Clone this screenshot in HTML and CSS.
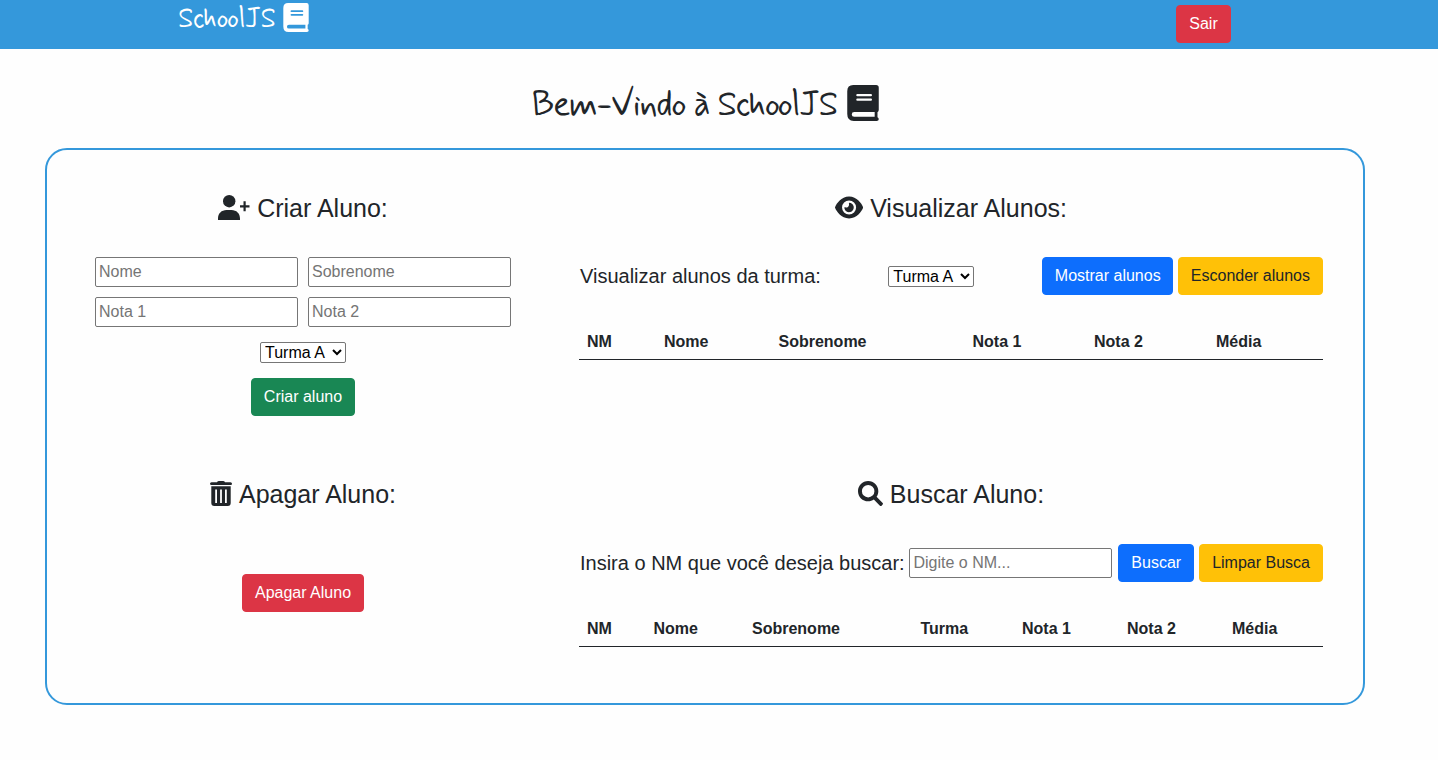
FILE: index.html
```html
<!DOCTYPE html>
<html lang="pt-BR">
<head>
<meta charset="utf-8">
<title>SchoolJS</title>
<link rel="stylesheet" href="styles.css">
</head>
<body>
<svg class="sprite" aria-hidden="true">
  <symbol id="book" viewBox="0 0 448 512"><path fill-rule="evenodd" d="M85 0H410Q448 0 448 38V356Q448 378 430 386V460Q448 468 448 486Q448 512 418 512H92Q0 512 0 414V88Q0 0 85 0zM100 384Q64 384 64 418Q64 452 100 452H390V384zM144 128Q128 128 128 144T144 160H336Q352 160 352 144T336 128zM144 192Q128 192 128 208T144 224H336Q352 224 352 208T336 192z"/></symbol>
  <symbol id="user-plus" viewBox="0 0 32 25"><circle cx="11.200" cy="6.200" r="6.200"/><path d="M0 25V23.500C0 18.500 3.500 15 8.500 15H13.500C18.500 15 22 18.500 22 23.500V25zM25.500 6.300H27.700V10.200H31.500V12.400H27.700V16.300H25.500V12.400H22V10.200H25.500z"/></symbol>
  <symbol id="eye" viewBox="0 0 576 512"><path d="M288 32c-80.800 0-145.500 36.800-192.600 80.600C48.600 156 17.300 208 2.500 243.700c-3.300 7.900-3.300 16.700 0 24.600C17.300 304 48.600 356 95.400 399.400C142.500 443.200 207.200 480 288 480s145.500-36.800 192.600-80.600c46.800-43.500 78.100-95.400 93-131.100c3.300-7.900 3.300-16.700 0-24.600c-14.900-35.700-46.200-87.700-93-131.100C433.500 68.800 368.800 32 288 32zM144 256a144 144 0 1 1 288 0 144 144 0 1 1 -288 0zm144-64c0 35.300-28.700 64-64 64c-7.100 0-13.900-1.200-20.300-3.300c-5.500-1.800-11.900 1.600-11.700 7.400c.3 6.900 1.300 13.800 3.200 20.700c13.700 51.200 66.400 81.600 117.600 67.900s81.600-66.400 67.900-117.600c-11.100-41.500-47.800-69.400-88.600-71.100c-5.800-.2-9.200 6.100-7.400 11.700c2.100 6.400 3.300 13.200 3.300 20.300z"/></symbol>
  <symbol id="trash" viewBox="0 0 22 25"><path fill-rule="evenodd" d="M7 1.200Q7.500 0 9 0H13Q14.500 0 15 1.200H20.500Q22 1.200 22 2.700T20.500 4H1.500Q0 4 0 2.700T1.500 1.200zM1.300 5.200H20.700V22Q20.700 25 17.700 25H4.300Q1.300 25 1.300 22zM5.200 8.500V22H7V8.500zM10.100 8.500V22H11.900V8.500zM15 8.500V22H16.800V8.500z"/></symbol>
  <symbol id="search" viewBox="0 0 512 512"><path fill-rule="evenodd" d="M416 208c0 45-14 84-36 116L500 444c16 16 16 28 0 44l-12 12c-16 16-28 16-44 0L324 380c-32 22-71 36-116 36C93 416 0 323 0 208S93 0 208 0S416 93 416 208zM208 336a128 128 0 1 0 0-256 128 128 0 1 0 0 256z"/></symbol>
</svg>

<header class="navbar">
  <div class="brand"><span class="brand-text">SchoolJS</span><svg class="brand-icon"><use href="#book"/></svg></div>
  <button class="btn red">Sair</button>
</header>

<h1 class="welcome"><span class="welcome-text">Bem-Vindo à SchoolJS</span><svg class="welcome-icon"><use href="#book"/></svg></h1>

<main class="panel">
  <section class="create">
    <h2 class="title"><svg class="icon icon-user"><use href="#user-plus"/></svg>Criar Aluno:</h2>
    <form class="form">
      <div class="fields">
        <input class="field" placeholder="Nome">
        <input class="field" placeholder="Sobrenome">
        <input class="field" placeholder="Nota 1">
        <input class="field" placeholder="Nota 2">
      </div>
      <select class="select"><option>Turma A</option><option>Turma B</option></select>
      <button type="button" class="btn green">Criar aluno</button>
    </form>
  </section>

  <section class="view">
    <h2 class="title"><svg class="icon icon-eye"><use href="#eye"/></svg>Visualizar Alunos:</h2>
    <div class="toolbar">
      <span class="label">Visualizar alunos da turma:</span>
      <select class="select"><option>Turma A</option><option>Turma B</option></select>
      <div class="actions">
        <button class="btn blue show">Mostrar alunos</button>
        <button class="btn yellow">Esconder alunos</button>
      </div>
    </div>
    <table class="table students">
      <thead><tr><th>NM</th><th>Nome</th><th>Sobrenome</th><th>Nota 1</th><th>Nota 2</th><th>Média</th></tr></thead>
    </table>
  </section>

  <section class="delete">
    <h2 class="title"><svg class="icon icon-trash"><use href="#trash"/></svg>Apagar Aluno:</h2>
    <button class="btn red">Apagar Aluno</button>
  </section>

  <section class="search">
    <h2 class="title"><svg class="icon icon-search"><use href="#search"/></svg>Buscar Aluno:</h2>
    <div class="toolbar">
      <span class="label">Insira o NM que você deseja buscar:</span>
      <input class="field" placeholder="Digite o NM...">
      <div class="actions">
        <button class="btn blue">Buscar</button>
        <button class="btn yellow">Limpar Busca</button>
      </div>
    </div>
    <table class="table results">
      <thead><tr><th>NM</th><th>Nome</th><th>Sobrenome</th><th>Turma</th><th>Nota 1</th><th>Nota 2</th><th>Média</th></tr></thead>
    </table>
  </section>
</main>
</body>
</html>
```
FILE: styles.css
```css
* { box-sizing: border-box; }

body {
  margin: 0;
  height: 760px;
  overflow: hidden;
  background: #fefefe;
  color: #212529;
  font: 16px/24px "Liberation Sans", Arial, sans-serif;
}

svg { display: block; fill: currentColor; flex: none; }
.sprite { position: absolute; width: 0; height: 0; }

.navbar {
  display: flex;
  justify-content: space-between;
  align-items: flex-start;
  height: 49px;
  padding: 5px 207px 0 178px;
  background: #3498db;
}
.navbar .btn { width: 55px; }

.brand {
  display: flex;
  gap: 7px;
  margin-top: -2px;
  color: #fff;
  font-family: Mynerve, Lato, sans-serif;
  font-weight: 400;
}
.brand-text { width: 98px; font-size: 28px; line-height: 34px; letter-spacing: -0.600px; white-space: nowrap; }
.brand-icon { width: 26px; height: 29px; }

.welcome {
  display: flex;
  justify-content: center;
  gap: 9px;
  width: 1410px;
  height: 36px;
  margin: 36px 0 27px;
  font: 400 36px/42px Mynerve, Lato, sans-serif;
  letter-spacing: -1.450px;
}
.welcome-text { width: 306px; white-space: nowrap; }
.welcome-icon { width: 32px; height: 36px; }

.panel {
  display: grid;
  grid-template-columns: 416px 744px;
  grid-template-rows: 286px 1fr;
  column-gap: 68px;
  width: 1320px;
  height: 557px;
  margin-left: 45px;
  padding: 43px 40px 0 48px;
  border: 2px solid #3498db;
  border-radius: 22px;
}

.title {
  display: flex;
  justify-content: center;
  align-items: center;
  gap: 7px;
  height: 30px;
  margin: 0;
  font-size: 25px;
  font-weight: 400;
  line-height: 30px;
}
.icon { height: 25px; margin-bottom: 2px; }
.icon-user { width: 32px; }
.icon-eye { width: 28.125px; }
.icon-trash { width: 22px; }
.icon-search { width: 25px; }

.form { display: flex; flex-direction: column; align-items: center; margin-top: 34px; }
.fields { display: grid; grid-template-columns: 203px 203px; gap: 10px; margin-bottom: 15px; }

.field {
  width: 203px;
  height: 30px;
  padding: 0 3px 1px;
  border: 1px solid #767676;
  border-radius: 2px;
  background: #fff;
  font: inherit;
}
.field::placeholder { color: #757575; }

.select {
  width: 86px;
  height: 21px;
  padding: 0;
  border: 1px solid #767676;
  border-radius: 2px;
  background-color: #fff;
  color: #000;
  font: inherit;
  line-height: normal;
}
.form .select { margin-bottom: 15px; }

.btn {
  height: 38px;
  padding: 6px 12px;
  border: 1px solid transparent;
  border-radius: 4px;
  color: #fff;
  font: inherit;
  white-space: nowrap;
}
.red { background-color: #dc3545; border-color: #dc3545; }
.green { background-color: #198754; border-color: #198754; }
.blue { background-color: #0d6efd; border-color: #0d6efd; }
.yellow { background-color: #ffc107; border-color: #ffc107; color: #212529; }
.show { width: 131px; }

.delete { display: flex; flex-direction: column; align-items: center; gap: 65px; }
.delete .title { width: 100%; }

.toolbar { display: flex; justify-content: space-between; align-items: center; margin-top: 34px; padding-left: 1px; }
.search .toolbar { margin-top: 35px; }
.search .field { margin-right: 1px; }
.actions { display: flex; gap: 5px; }
.label { font-size: 20px; line-height: 30px; }

.table {
  table-layout: fixed;
  width: 744px;
  margin-top: 24px;
  border-collapse: separate;
  border-spacing: 0;
}
.table th {
  height: 41px;
  padding: 5px 8px 0;
  border-bottom: 1px solid #212529;
  text-align: left;
  font-weight: 700;
}
.students th:nth-child(1) { width: 77px; }
.students th:nth-child(2) { width: 114.500px; }
.students th:nth-child(3) { width: 194px; }
.students th:nth-child(4) { width: 121.500px; }
.students th:nth-child(5) { width: 122px; }
.results th:nth-child(1) { width: 66.500px; }
.results th:nth-child(2) { width: 98.500px; }
.results th:nth-child(3) { width: 168.500px; }
.results th:nth-child(4) { width: 101.500px; }
.results th:nth-child(5) { width: 105px; }
.results th:nth-child(6) { width: 105px; }
```
